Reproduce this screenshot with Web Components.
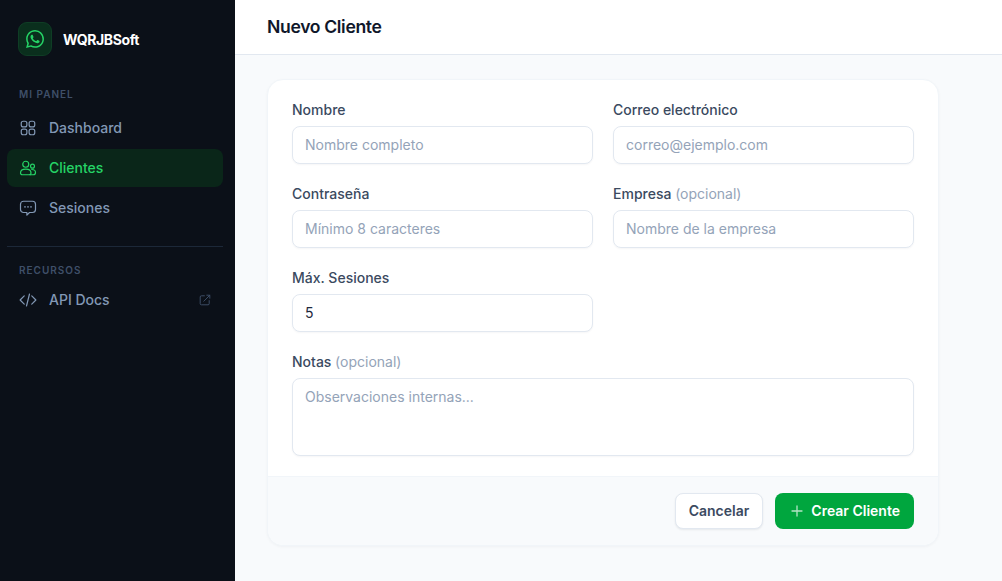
<!DOCTYPE html>
<html lang="es">
<head>
<meta charset="utf-8">
<title>Nuevo Cliente</title>
<style>
  html, body { margin: 0; height: 100%; }
  body { font-family: Inter, "Liberation Sans", sans-serif; background: #f8fafc; overflow: hidden; }
</style>
</head>
<body>
<app-shell>
  <side-bar slot="sidebar">
    <brand-logo>WQRJBSoft</brand-logo>
    <nav-section title="MI PANEL">
      <nav-item icon="grid">Dashboard</nav-item>
      <nav-item icon="users" active>Clientes</nav-item>
      <nav-item icon="chat">Sesiones</nav-item>
    </nav-section>
    <nav-section title="RECURSOS" divided>
      <nav-item icon="code" external>API Docs</nav-item>
    </nav-section>
  </side-bar>
  <page-header slot="header">Nuevo Cliente</page-header>
  <form-card>
    <form-field label="Nombre" placeholder="Nombre completo"></form-field>
    <form-field label="Correo electrónico" placeholder="correo@ejemplo.com"></form-field>
    <form-field label="Contraseña" placeholder="Mínimo 8 caracteres"></form-field>
    <form-field label="Empresa" hint="(opcional)" placeholder="Nombre de la empresa"></form-field>
    <form-field label="Máx. Sesiones" value="5"></form-field>
    <form-field label="Notas" hint="(opcional)" placeholder="Observaciones internas..." multiline></form-field>
    <app-button slot="actions">Cancelar</app-button>
    <app-button slot="actions" primary>Crear Cliente</app-button>
  </form-card>
</app-shell>

<script>
  const ICONS = {
    grid: '<rect x="3" y="3" width="7.5" height="7.5" rx="2.6"/><rect x="13.5" y="3" width="7.5" height="7.5" rx="2.6"/><rect x="3" y="13.5" width="7.5" height="7.5" rx="2.6"/><rect x="13.5" y="13.5" width="7.5" height="7.5" rx="2.6"/>',
    users: '<circle cx="9" cy="7" r="4"/><circle cx="18" cy="9.5" r="2.6"/><path d="M15 21H4.5A2.5 2.5 0 0 1 2 18.5C2 15.5 5 13.5 9 13.5s7 2 7 5A2.5 2.5 0 0 1 13.5 21z"/><path d="M17 14c3 0 5 1.6 5 4 0 1.6-1 3-3 3h-4"/>',
    chat: '<path d="M6 3h12a4 4 0 0 1 4 4v7a4 4 0 0 1-4 4h-4l-3.5 3.5V18H6a4 4 0 0 1-4-4V7a4 4 0 0 1 4-4z"/><path d="M8 10.5h.01M12 10.5h.01M16 10.5h.01" stroke-width="2.2"/>',
    code: '<path d="M7 6.5 1.5 12 7 17.5"/><path d="M17 6.5 22.5 12 17 17.5"/><path d="M14 4 10 20"/>',
  };

  const svgIcon = (name, size) => `
    <svg width="${size}" height="${size}" viewBox="0 0 24 24" fill="none" stroke="currentColor"
      stroke-width="1.6" stroke-linecap="round" stroke-linejoin="round">${ICONS[name]}</svg>`;

  class AppShell extends HTMLElement {
    constructor() {
      super();
      this.attachShadow({ mode: 'open' }).innerHTML = `
        <style>
          :host { display: flex; height: 100vh; }
          .main { flex: 1; min-width: 0; display: flex; flex-direction: column; }
          .content { padding: 24px 63px 0 32px; }
        </style>
        <slot name="sidebar"></slot>
        <div class="main">
          <slot name="header"></slot>
          <div class="content"><slot></slot></div>
        </div>
      `;
    }
  }

  class SideBar extends HTMLElement {
    constructor() {
      super();
      this.attachShadow({ mode: 'open' }).innerHTML = `
        <style>
          :host {
            display: flex;
            flex-direction: column;
            flex: none;
            box-sizing: border-box;
            width: 235px;
            padding: 22px 12px 0 7px;
            background: #0b1018;
          }
        </style>
        <slot></slot>
      `;
    }
  }

  class BrandLogo extends HTMLElement {
    constructor() {
      super();
      this.attachShadow({ mode: 'open' }).innerHTML = `
        <style>
          :host {
            display: flex;
            align-items: center;
            gap: 11px;
            padding: 0 0 0 11px;
            margin-bottom: 31px;
            color: #fff;
            font-size: 14px;
            line-height: 33px;
            font-weight: 700;
            letter-spacing: -0.4px;
          }
          .mark {
            display: flex;
            align-items: center;
            justify-content: center;
            box-sizing: border-box;
            width: 34px;
            height: 34px;
            border: 1px solid #0f3d25;
            border-radius: 9px;
            background: #0a2f1d;
            color: #25d366;
          }
        </style>
        <span class="mark">
          <svg width="18" height="18" viewBox="0 0 24 24" fill="currentColor">
            <path d="M17.47 14.38c-.3-.15-1.76-.87-2.03-.97-.27-.1-.47-.15-.67.15-.2.3-.77.97-.94 1.16-.17.2-.35.22-.64.08-.3-.15-1.26-.46-2.39-1.48-.88-.79-1.48-1.76-1.65-2.06-.17-.3-.02-.46.13-.6.13-.14.3-.35.45-.52.15-.17.2-.3.3-.5.1-.2.05-.37-.03-.52-.07-.15-.67-1.61-.91-2.2-.24-.58-.49-.5-.67-.51h-.57c-.2 0-.52.07-.79.37-.27.3-1.04 1.02-1.04 2.48s1.06 2.88 1.21 3.07c.15.2 2.1 3.2 5.08 4.49.71.3 1.26.49 1.7.63.71.22 1.36.19 1.87.12.57-.09 1.76-.72 2-1.41.25-.7.25-1.29.18-1.41-.08-.13-.27-.2-.57-.35z"/>
            <path d="M12.05 21.79h-.01a9.87 9.87 0 0 1-5.03-1.38l-.36-.21-3.74.98 1-3.65-.24-.37a9.86 9.86 0 0 1-1.51-5.26c0-5.45 4.44-9.88 9.89-9.88 2.64 0 5.12 1.03 6.99 2.9a9.82 9.82 0 0 1 2.89 6.99c0 5.45-4.44 9.88-9.88 9.88zM20.46 3.49A11.82 11.82 0 0 0 12.05 0C5.5 0 .16 5.34.16 11.89c0 2.1.55 4.14 1.59 5.95L.06 24l6.31-1.65a11.88 11.88 0 0 0 5.68 1.45h.01c6.55 0 11.89-5.34 11.89-11.89 0-3.18-1.24-6.16-3.49-8.41z"/>
          </svg>
        </span>
        <slot></slot>
      `;
    }
  }

  class NavSection extends HTMLElement {
    constructor() {
      super();
      const title = this.getAttribute('title');
      this.removeAttribute('title');
      this.attachShadow({ mode: 'open' }).innerHTML = `
        <style>
          :host { display: block; }
          :host([divided]) { margin-top: 19px; padding-top: 16px; border-top: 1px solid #1c2838; }
          :host([divided]) .title { margin-bottom: 3px; }
          .title {
            padding: 0 12px;
            margin-bottom: 7px;
            color: #3f4f68;
            font-size: 10px;
            line-height: 15px;
            font-weight: 600;
            letter-spacing: 1px;
          }
          .list { display: flex; flex-direction: column; gap: 2px; }
        </style>
        <div class="title">${title}</div>
        <div class="list"><slot></slot></div>
      `;
    }
  }

  class NavItem extends HTMLElement {
    constructor() {
      super();
      const icon = this.getAttribute('icon');
      this.attachShadow({ mode: 'open' }).innerHTML = `
        <style>
          :host {
            display: flex;
            align-items: center;
            gap: 12px;
            box-sizing: border-box;
            height: 38px;
            padding: 0 12px;
            border-radius: 8px;
            color: #8298b5;
            font-size: 14px;
            font-weight: 500;
          }
          :host([active]) {
            background: #0a2619;
            color: #25d366;
          }
          svg { flex: none; display: block; }
          .label { flex: 1; margin-bottom: 1px; }
          .ext { color: #3f4f68; }
        </style>
        ${svgIcon(icon, 18)}
        <span class="label"><slot></slot></span>
        ${this.hasAttribute('external') ? `
          <span class="ext">
            <svg width="12" height="12" viewBox="2 2 20 20" fill="none" stroke="currentColor" stroke-width="1.6" stroke-linecap="round" stroke-linejoin="round">
              <path d="M11 5H6a2 2 0 0 0-2 2v11a2 2 0 0 0 2 2h11a2 2 0 0 0 2-2v-5"/><path d="M10 14 20 4"/><path d="M15 4h5v5"/>
            </svg>
          </span>` : ''}
      `;
    }
  }

  class PageHeader extends HTMLElement {
    constructor() {
      super();
      this.attachShadow({ mode: 'open' }).innerHTML = `
        <style>
          :host {
            display: flex;
            align-items: center;
            flex: none;
            box-sizing: border-box;
            height: 55px;
            padding: 0 32px 2px;
            background: #fff;
            border-bottom: 1px solid #e2e8f0;
            color: #0f172a;
            font-size: 17.6px;
            font-weight: 600;
            letter-spacing: -0.35px;
          }
        </style>
        <slot></slot>
      `;
    }
  }

  class FormCard extends HTMLElement {
    constructor() {
      super();
      this.attachShadow({ mode: 'open' }).innerHTML = `
        <style>
          :host {
            display: block;
            box-sizing: border-box;
            width: 672px;
            background: #fff;
            border: 1px solid #f1f5f9;
            border-radius: 16px;
            box-shadow: 0 1px 3px rgba(15, 23, 42, 0.04);
            overflow: hidden;
          }
          .fields {
            display: grid;
            grid-template-columns: 1fr 1fr;
            gap: 20px;
            padding: 20px 24px;
          }
          .actions {
            display: flex;
            justify-content: flex-end;
            gap: 12px;
            padding: 16px 24px;
            background: #f8fafc;
            border-top: 1px solid #f1f5f9;
          }
          ::slotted(form-field[multiline]) { grid-column: 1 / -1; }
          ::slotted(form-field[label="Máx. Sesiones"]) { grid-column: 1; }
        </style>
        <div class="fields"><slot></slot></div>
        <div class="actions"><slot name="actions"></slot></div>
      `;
    }
  }

  class FormField extends HTMLElement {
    constructor() {
      super();
      const label = this.getAttribute('label');
      const hint = this.getAttribute('hint');
      const placeholder = this.getAttribute('placeholder') || '';
      const value = this.getAttribute('value') || '';
      const control = this.hasAttribute('multiline')
        ? `<textarea placeholder="${placeholder}"></textarea>`
        : `<input type="text" placeholder="${placeholder}" value="${value}">`;
      this.attachShadow({ mode: 'open' }).innerHTML = `
        <style>
          :host { display: block; min-width: 0; }
          label {
            display: block;
            margin-bottom: 6px;
            color: #3b4a5f;
            font-size: 14px;
            line-height: 20px;
            font-weight: 500;
          }
          .hint { color: #94a3b8; font-weight: 400; }
          input, textarea {
            display: block;
            box-sizing: border-box;
            width: 100%;
            height: 38px;
            padding: 0 12px 1px;
            background: #fff;
            border: 1px solid #e2e8f0;
            border-radius: 8px;
            box-shadow: 0 1px 2px rgba(15, 23, 42, 0.04);
            color: #1e293b;
            font: 400 14px/20px Inter, "Liberation Sans", sans-serif;
            outline: none;
          }
          textarea { height: 78px; padding: 8px 12px; resize: none; }
          ::placeholder { color: #94a3b8; opacity: 1; }
        </style>
        <label>${label}${hint ? ` <span class="hint">${hint}</span>` : ''}</label>
        ${control}
      `;
    }
  }

  class AppButton extends HTMLElement {
    constructor() {
      super();
      const primary = this.hasAttribute('primary');
      this.attachShadow({ mode: 'open' }).innerHTML = `
        <style>
          :host {
            display: inline-flex;
            align-items: center;
            gap: 8px;
            box-sizing: border-box;
            height: 36px;
            padding: 0 13px;
            background: #fff;
            border: 1px solid #e2e8f0;
            border-radius: 8px;
            box-shadow: 0 1px 2px rgba(15, 23, 42, 0.08);
            color: #3b4a5f;
            font-size: 14px;
            font-weight: 600;
          }
          :host([primary]) {
            padding: 0 14px;
            background: #00a63e;
            border: 0;
            box-shadow: none;
            color: #fff;
          }
          svg { display: block; opacity: 0.7; }
          .text { margin-bottom: 1px; }
        </style>
        ${primary ? `<svg width="14" height="14" viewBox="0 0 14 14" fill="none" stroke="currentColor" stroke-width="1.3" stroke-linecap="round"><path d="M8 2v10M3 7h10"/></svg>` : ''}
        <span class="text"><slot></slot></span>
      `;
    }
  }

  customElements.define('app-shell', AppShell);
  customElements.define('side-bar', SideBar);
  customElements.define('brand-logo', BrandLogo);
  customElements.define('nav-section', NavSection);
  customElements.define('nav-item', NavItem);
  customElements.define('page-header', PageHeader);
  customElements.define('form-card', FormCard);
  customElements.define('form-field', FormField);
  customElements.define('app-button', AppButton);
</script>
</body>
</html>
